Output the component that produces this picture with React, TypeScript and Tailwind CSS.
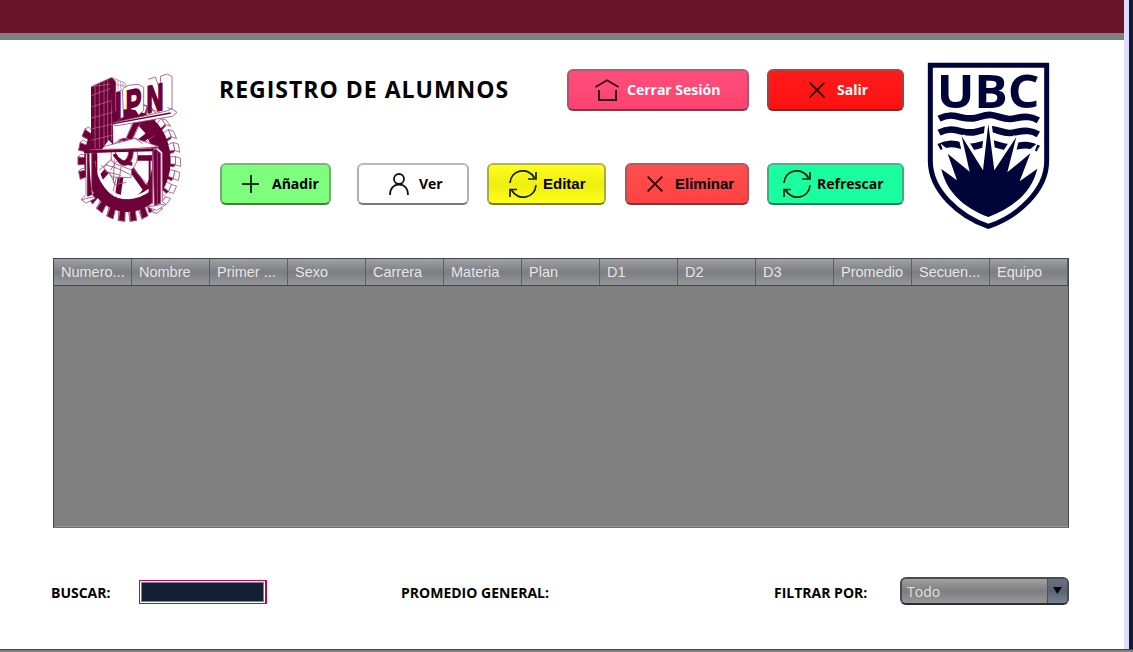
import React from "react";

const columns = [
  "Numero...", "Nombre", "Primer ...", "Sexo", "Carrera", "Materia", "Plan",
  "D1", "D2", "D3", "Promedio", "Secuen...", "Equipo",
];

const toothAngles = Array.from({ length: 26 }, (_, i) => i * (360 / 26));

function gearPoint(deg: number, r: number, dx = 0, dy = 0) {
  const a = (deg * Math.PI) / 180;
  return `${(172 + dx + 127 * r * Math.cos(a)).toFixed(1)},${(302 + dy + 156 * r * Math.sin(a)).toFixed(1)}`;
}

function IpnLogo() {
  return (
    <svg className="h-[175px] w-[130px] shrink-0" viewBox="0 0 390 525" fill="none">
      <g stroke="#a0527a" strokeWidth="2.5">
        {toothAngles.map((d) => {
          const right = d < 62 || d > 290;
          const left = d > 165 && d < 215;
          const bottom = d >= 62 && d <= 145;
          if (!right && !left && !bottom) return null;
          const len = right ? 1.14 : 1.17;
          return (
            <g key={d}>
              <polygon
                fill={right ? "#fff" : "#6d0038"}
                points={`${gearPoint(d - 4, 0.97)} ${gearPoint(d - 4, len)} ${gearPoint(d + 4, len)} ${gearPoint(d + 4, 0.97)}`}
              />
              <polygon
                fill={right ? "#6d0038" : "#fff"}
                points={`${gearPoint(d + 3.5, 0.97)} ${gearPoint(d + 3.5, len)} ${gearPoint(d + 6, len, right ? -4 : 8)} ${gearPoint(d + 6, 0.97)}`}
              />
              {right && (
                <polygon
                  fill="#fff"
                  points={`${gearPoint(d - 4, len)} ${gearPoint(d - 4, len, 15, 5)} ${gearPoint(d + 4, len, 15, 5)} ${gearPoint(d + 4, len)}`}
                />
              )}
            </g>
          );
        })}
      </g>
      <ellipse cx="172" cy="302" rx="130" ry="154" fill="#6d0038" />
      <ellipse cx="164" cy="300" rx="84" ry="118" fill="#fff" />
      <g stroke="#6d0038" strokeWidth="17">
        <path d="M158 278 205 177M165 278 250 214M176 294 248 294M170 307 226 386M158 308 143 410M140 300 82 365" />
      </g>
      <g stroke="#a0527a" strokeWidth="2.5">
        <path d="M169 279 216 178M152 274 192 179M170 289 254 226M177 313 238 379M149 310 126 407M135 290 75 341" />
        <ellipse cx="163" cy="286" rx="40" ry="51" fill="#fff" />
        <ellipse cx="163" cy="276" rx="27" ry="41" fill="#6d0038" />
        <ellipse cx="156" cy="273" rx="20" ry="31" fill="#fff" />
        <path d="M132 310 185 330 183 353 127 351 101 324 122 299Z" fill="#fff" />
        <path d="M106 314 142 325 181 344M105 334 152 346M133 299 130 370M153 320 146 373M119 339 136 374 169 367M141 303 121 331M103 323 94 316" />
      </g>
      <path d="M79 303C83 359 115 404 161 412C196 418 221 403 240 389" stroke="#fff" strokeWidth="9" />
      <path d="M133 282C143 302 158 309 187 312" stroke="#6d0038" strokeWidth="11" />

      <g stroke="#a0527a" strokeWidth="2.5">
        <path d="M48 280V404L33 419L49 429L76 415L65 401V276Z" fill="#fff" />
        <path d="M55 277V405L65 401" fill="#6d0038" stroke="#6d0038" strokeWidth="7" />
        <path d="M43 275 195 235 267 260 55 276Z" fill="#fff" />
        <path d="M43 275 264 264M45 280 246 266M63 268 205 267M130 225 61 278M195 235 218 251" />
        <path d="M248 268V430L230 441L260 451L288 434L277 424V277L263 264Z" fill="#fff" />
        <path d="M249 273 257 267 272 280V430L253 437Z" fill="#6d0038" />
        <path d="M247 281V430M262 270V435M232 441 284 432M35 419 73 410" />
      </g>
      <path d="M42 275 251 270" stroke="#6d0038" strokeWidth="8" />
      <path d="M239 286V421M79 286V390" stroke="#6d0038" strokeWidth="6" />

      <polygon points="63,80 125,52 130,254 116,240 96,268 63,268" fill="#6d0038" />
      <g stroke="#b6799a" strokeWidth="2">
        <path d="M64 107 125 84M64 141 127 121M64 174 128 157M64 207 128 192M64 241 128 225M75 75V265M88 69V265M102 62V258M113 57V246" />
        <path d="M63 80 125 52 167 70V92M63 80 125 72 165 78M125 53V243M131 55V95M137 57V91M144 60V89M152 64V87M159 67V82" />
      </g>
      <path d="M119 56 129 55 137 67V182L129 186Z" fill="#6d0038" />

      <g stroke="#a0527a" strokeWidth="2.5" fill="#fff">
        <path d="M137 98 157 89 161 171 144 180ZM158 86 175 76 205 73 221 82V151L206 165M235 58 256 51 270 90 272 48 292 42 306 50V148L292 143" />
        <path d="M130 188 290 153 306 147 321 157 307 169 135 198Z" />
      </g>
      <g transform="matrix(1 -.21 0 1 139 178)" fill="#6d0038" stroke="#6d0038" strokeWidth="6" fontFamily="Liberation Sans, sans-serif" fontWeight="700" fontSize="114">
        <text transform="scale(.62 1)" x="-6 45 146">IPN</text>
      </g>
      <path d="M130 191 302 159" stroke="#6d0038" strokeWidth="4" />
    </svg>
  );
}

function UbcLogo() {
  const wave = "q25 -13 49 -8c25 5 33 9 54 7c20 -2 31 -12 53 -10c22 2 34 13 57 12c18 -1 33 -9 55 -6q14 1 30 10";
  return (
    <svg className="h-[180px] w-[150px] shrink-0" viewBox="0 0 450 540" fill="none">
      <path d="M46 31H395V318C395 407 306 486 220 514C134 486 46 407 46 318Z" fill="#fff" stroke="#000539" strokeWidth="15" />
      <text x="65" y="158" textLength="309" lengthAdjust="spacingAndGlyphs" fill="#000539" fontFamily="Open Sans, sans-serif" fontWeight="700" fontSize="141">UBC</text>
      <g stroke="#000539" strokeWidth="20">
        <path d={`M72 191${wave}`} />
        <path d={`M72 233${wave}`} />
        <path d={`M72 276${wave}`} />
      </g>
      <path
        d="M79 342 126 376 98 296 164 350 140 244 204 346 220 207 238 346 304 246 277 352 346 295 314 379 367 341C350 411 296 458 220 486C145 458 95 411 79 342Z"
        fill="#000539" stroke="#fff" strokeWidth="20" paintOrder="stroke"
      />
      <path d="M369 278V336M72 278V336" stroke="#fff" strokeWidth="1" />
    </svg>
  );
}

function Plus() {
  return (
    <svg className="h-[18px] w-[18px]" viewBox="0 0 18 18" stroke="#15351a" strokeWidth="2"><path d="M9 0V18M0 9H17" /></svg>
  );
}
function Cross() {
  return (
    <svg className="h-4 w-4" viewBox="0 0 16 16" stroke="#190404" strokeWidth="1.7"><path d="M.7.7 15.3 15.3M15.3.7.7 15.3" /></svg>
  );
}
function User() {
  return (
    <svg className="h-[22px] w-5" viewBox="0 0 20 22" fill="none" stroke="#111" strokeWidth="1.8">
      <circle cx="10" cy="6" r="5" /><path d="M1 22C1 15 5 11.5 10 11.5S19 15 19 22" />
    </svg>
  );
}
function Refresh() {
  return (
    <svg className="h-7 w-7" viewBox="0 0 28 28" fill="none" stroke="#172008" strokeWidth="1.7">
      <path d="M1 13C1.500 0 19-4 25.500 8M27 2V9H19M27 15C26.500 28 9 32 2.500 20M1 27V19.500H8" />
    </svg>
  );
}
function Home() {
  return (
    <svg className="h-[22px] w-6" viewBox="0 0 24 22" fill="none" stroke="#300c18">
      <path d="M.5 8 12 1.200 23.500 8" strokeWidth="1.800" /><path d="M4 11V21H21V11" strokeWidth="2" />
    </svg>
  );
}

function Button({ children, className }: { children: React.ReactNode; className: string }) {
  return (
    <button className={`flex h-[42px] shrink-0 items-center whitespace-nowrap rounded-[6px] border-2 border-[#66606080] border-t-[#77707080] border-b-[#333a] bg-clip-border pb-px font-['Open_Sans',sans-serif] text-[14px] font-bold leading-none ${className}`}>
      {children}
    </button>
  );
}

export default function App() {
  return (
    <div className="flex h-[652px] w-[1133px] flex-col overflow-hidden bg-white font-['Open_Sans',sans-serif] text-black">
      <div className="flex h-[649px]">
        <main className="flex w-[1124px] flex-col">
          <div className="h-10 shrink-0 border-b-[7px] border-[#808080] bg-[#6b1329]" />
          <header className="flex h-[218px] shrink-0 items-start pl-[70px]">
            <div className="pt-5"><IpnLogo /></div>
            <div className="ml-[19px] flex w-[685px] flex-col pt-[29px]">
              <div className="flex h-[94px] items-start">
                <h1 className="w-[348px] whitespace-nowrap pt-[3px] text-[23px] font-bold leading-[34px] tracking-[1px]">REGISTRO DE ALUMNOS</h1>
                <Button className="w-[182px] bg-linear-to-b from-[#ff4e7b] to-[#ff4270] pl-[26px] text-white"><Home /><span className="ml-[8px]">Cerrar Sesión</span></Button>
                <Button className="ml-[18px] w-[137px] bg-linear-to-b from-[#ff1b1b] to-[#ff1010] pl-10 text-white"><Cross /><span className="ml-3">Salir</span></Button>
              </div>
              <div className="flex">
                <Button className="ml-px w-[111px] bg-[#7dff7d] pl-5"><Plus /><span className="ml-3">Añadir</span></Button>
                <Button className="ml-[26px] w-[112px] bg-white pl-[30px]"><User /><span className="ml-[10px]">Ver</span></Button>
                <Button className="ml-[18px] w-[119px] bg-linear-to-b from-[#ffff1c] via-[#eeee10] to-[#ffff18] pl-5"><Refresh /><span className="ml-[6px] font-['Liberation_Sans',sans-serif] text-[15px]">Editar</span></Button>
                <Button className="ml-[19px] w-[124px] bg-linear-to-b from-[#ff4e4e] to-[#ff4242] pl-5"><Cross /><span className="ml-3 font-['Liberation_Sans',sans-serif] text-[15px]">Eliminar</span></Button>
                <Button className="ml-[18px] w-[137px] bg-[#19ffa0] pl-[14px]"><Refresh /><span className="ml-[6px]">Refrescar</span></Button>
              </div>
            </div>
            <div className="ml-[11px] pt-[15px]"><UbcLogo /></div>
          </header>

          <section className="ml-[53px] flex h-[270px] w-[1016px] shrink-0 flex-col border border-[#45464b] border-b-[#6b6b72] bg-[#808080]">
            <div className="grid h-[27px] grid-cols-13 border-b border-[#45464b] bg-linear-to-b from-[#a0a1a5] via-[#7d7e83] to-[#96979b] font-['Liberation_Sans',sans-serif] text-[14.5px] text-[#e6e6e6]">
              {columns.map((c) => (
                <div key={c} className="flex items-center whitespace-nowrap border-r border-[#5e5f64] pl-[7px] pt-px">{c}</div>
              ))}
            </div>
            <div className="grow border-b border-[#94949a]" />
          </section>

          <footer className="flex h-[121px] shrink-0 pl-[51px] pt-[49px] text-[14px] font-bold">
            <label className="w-[88px] whitespace-nowrap pt-[5px]">BUSCAR:</label>
            <div className="mt-[3px] h-6 w-32 border border-r-2 border-[#c4005f] bg-white p-px">
              <div className="h-full border border-[#7c8390] bg-[#142033]" />
            </div>
            <span className="ml-[134px] w-[373px] whitespace-nowrap pt-[5px]">PROMEDIO GENERAL:</span>
            <span className="w-[126px] whitespace-nowrap pt-[5px]">FILTRAR POR:</span>
            <div className="flex h-7 w-[169px] overflow-hidden rounded-[6px] border-2 border-[#4b4c4f] border-b-[#2b2c30] bg-linear-to-b from-[#a1a1a1] via-[#7e7e80] to-[#98989a] text-[14px] font-normal text-[#e2e2e2]">
              <span className="grow pl-[5px] pt-[2px]">Todo</span>
              <div className="flex w-5 justify-center border-l border-[#495362] bg-linear-to-b from-[#687180] via-[#5a6473] to-[#788292] pt-2">
                <svg className="h-[7px] w-[9px]" viewBox="0 0 9 7"><path d="M0 0H9L4.500 7Z" fill="#050505" /></svg>
              </div>
            </div>
          </footer>
        </main>
        <div className="w-[5px] bg-[#deddff]" />
        <div className="w-1 bg-[#121c32]" />
      </div>
      <div className="h-[3px] border-t border-[#424248] bg-[#808080]" />
    </div>
  );
}
